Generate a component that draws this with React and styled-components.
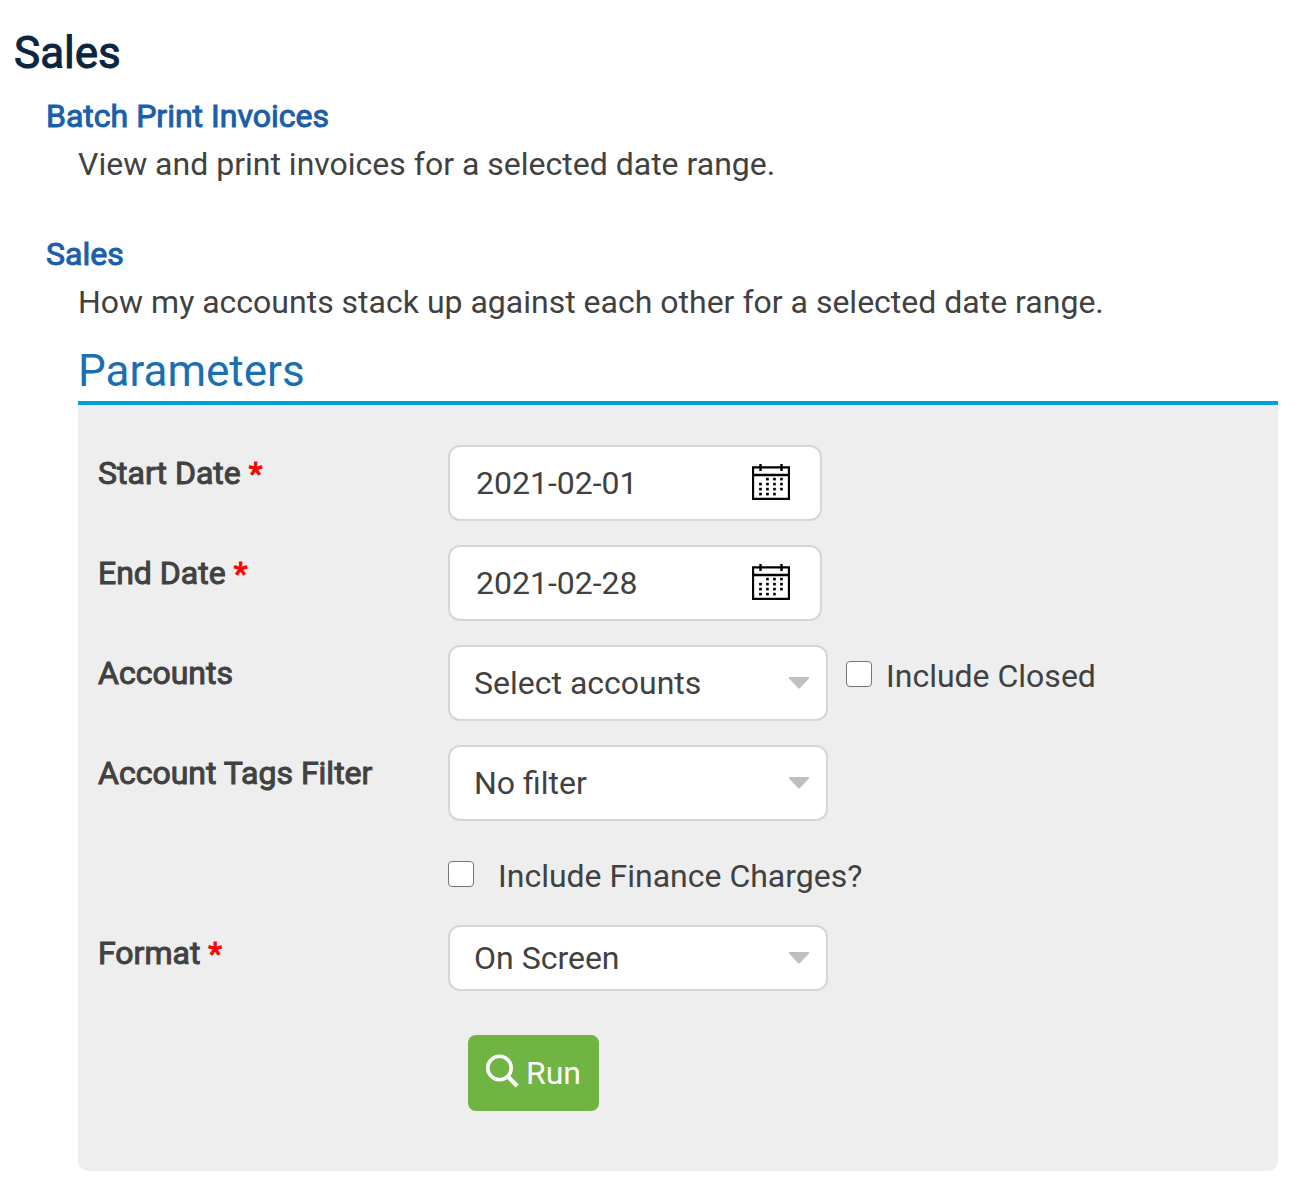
import { useState } from 'react';
import styled, { createGlobalStyle } from 'styled-components';

const GlobalStyle = createGlobalStyle`
  *, *::before, *::after {
    box-sizing: border-box;
  }

  body {
    margin: 0;
    background: #fff;
    color: #414141;
    font-family: Roboto, 'Liberation Sans', sans-serif;
    font-size: 32px;
    line-height: 48px;
  }

  input, select, button {
    font: inherit;
    color: inherit;
  }
`;

const Page = styled.main`
  padding: 28px 34px 6px 14px;
`;

const PageTitle = styled.h1`
  margin: 0 0 14px;
  color: #0a2540;
  font-size: 44px;
  font-weight: 400;
  line-height: 50px;
  -webkit-text-stroke: 1px currentColor;
`;

const Report = styled.section`
  margin: 0 0 42px 32px;

  &:last-child {
    margin-bottom: 0;
  }
`;

const ReportTitle = styled.h2`
  margin: 0;
  color: #1b5faa;
  font-size: 32px;
  font-weight: 400;
  -webkit-text-stroke: 1px currentColor;

  a {
    color: inherit;
    text-decoration: none;
  }
`;

const ReportBody = styled.div`
  margin-left: 32px;
`;

const Description = styled.p`
  margin: 0;
`;

const PanelTitle = styled.h3`
  margin: 20px 0 0;
  padding-bottom: 5px;
  border-bottom: 4px solid #00a0d8;
  color: #1a6fb3;
  font-size: 44px;
  font-weight: 400;
  line-height: 50px;
`;

const Panel = styled.form`
  display: flex;
  flex-direction: column;
  gap: 24px;
  padding: 40px 20px 60px;
  background: #eee;
  border-radius: 0 0 10px 10px;
`;

const Row = styled.div`
  display: grid;
  grid-template-columns: 350px 1fr;
  align-items: start;
`;

const Label = styled.label`
  line-height: 56px;
  -webkit-text-stroke: 1px currentColor;
`;

const Required = styled.span`
  color: #f00;
  -webkit-text-stroke: 1px currentColor;
`;

const Controls = styled.div`
  grid-column: 2;
  display: flex;
  flex-wrap: wrap;
  column-gap: 18px;
`;

const DateBox = styled.div`
  display: flex;
  align-items: center;
  width: 374px;
  height: 76px;
  padding: 0 30px 0 26px;
  background: #fff;
  border: 2px solid #d6d6d6;
  border-radius: 12px;
`;

const DateInput = styled.input`
  flex: 1;
  min-width: 0;
  padding: 0;
  background: none;
  border: 0;
  outline: none;
`;

const CalendarButton = styled.button`
  display: flex;
  padding: 0 0 2px;
  background: none;
  border: 0;
  cursor: pointer;
`;

const SelectBox = styled.div`
  position: relative;
  width: 380px;

  svg {
    position: absolute;
    top: 50%;
    right: 18px;
    transform: translateY(-50%);
    pointer-events: none;
  }
`;

const Select = styled.select`
  display: block;
  width: 100%;
  height: ${({ $compact }) => ($compact ? '66px' : '76px')};
  padding: 0 48px 0 24px;
  appearance: none;
  background: #fff;
  border: 2px solid #d6d6d6;
  border-radius: 12px;
`;

const CheckLabel = styled.label`
  display: flex;
  align-items: baseline;
  gap: ${({ $wide }) => ($wide ? '24px' : '14px')};
  height: 56px;
  line-height: 62px;
`;

const Checkbox = styled.input`
  flex: none;
  width: 26px;
  height: 26px;
  margin: 0;
  appearance: none;
  background: #fff;
  border: 1px solid #767676;
  border-radius: 4px;

  &:checked {
    background: #1b5faa;
  }
`;

const RunButton = styled.button`
  display: flex;
  align-items: center;
  align-self: flex-start;
  gap: 7px;
  height: 76px;
  margin: 20px 0 0 370px;
  padding: 0 18px;
  background: #70b443;
  border: 0;
  border-radius: 8px;
  color: #fff;
  cursor: pointer;

  svg {
    margin-bottom: 4px;
  }
`;

const dots = [
  [15, 15], [22, 15], [29, 15],
  [8, 20], [15, 20], [22, 20], [29, 20],
  [8, 25], [15, 25], [22, 25], [29, 25],
  [8, 30], [15, 30], [22, 30],
];

const CalendarIcon = () => (
  <svg width="38" height="36" viewBox="0 0 38 36" aria-hidden="true">
    <path d="M1 3.3h36v31.5H1zM1 11h36" fill="none" stroke="#000" strokeWidth="2.3" />
    <path d="M8.5 0v7M29.5 0v7" stroke="#000" strokeWidth="2.4" />
    {dots.map(([x, y]) => (
      <rect key={`${x}-${y}`} x={x - 0.9} y={y - 1.2} width="2.7" height="2.6" />
    ))}
  </svg>
);

const CaretIcon = () => (
  <svg width="22" height="12" viewBox="0 0 22 12" aria-hidden="true">
    <path d="M1 0h20v1.5L12 11q-1 1-2 0L1 1.5z" fill="#bfbfbf" />
  </svg>
);

const SearchIcon = () => (
  <svg width="33" height="34" viewBox="0 0 33 34" aria-hidden="true">
    <circle cx="13.5" cy="14" r="11.7" fill="none" stroke="#fff" strokeWidth="3.6" />
    <path d="M21.8 22.5l9.4 9.4" stroke="#fff" strokeWidth="4.2" />
  </svg>
);

const DateField = ({ id, label, initial }) => {
  const [value, setValue] = useState(initial);

  return (
    <Row>
      <Label htmlFor={id}>
        {label} <Required>*</Required>
      </Label>
      <Controls>
        <DateBox>
          <DateInput id={id} type="text" value={value} onChange={(e) => setValue(e.target.value)} />
          <CalendarButton type="button" aria-label={`Choose ${label}`}>
            <CalendarIcon />
          </CalendarButton>
        </DateBox>
      </Controls>
    </Row>
  );
};

const SelectField = ({ id, label, option, required, compact, children }) => (
  <Row>
    <Label htmlFor={id}>
      {label} {required && <Required>*</Required>}
    </Label>
    <Controls>
      <SelectBox>
        <Select id={id} $compact={compact}>
          <option>{option}</option>
        </Select>
        <CaretIcon />
      </SelectBox>
      {children}
    </Controls>
  </Row>
);

const App = () => {
  return (
    <>
      <GlobalStyle />
      <Page>
        <PageTitle>Sales</PageTitle>

        <Report>
          <ReportTitle>
            <a href="#batch-print">Batch Print Invoices</a>
          </ReportTitle>
          <ReportBody>
            <Description>View and print invoices for a selected date range.</Description>
          </ReportBody>
        </Report>

        <Report>
          <ReportTitle>
            <a href="#sales">Sales</a>
          </ReportTitle>
          <ReportBody>
            <Description>
              How my accounts stack up against each other for a selected date range.
            </Description>
            <PanelTitle>Parameters</PanelTitle>
            <Panel onSubmit={(e) => e.preventDefault()}>
              <DateField id="start-date" label="Start Date" initial="2021-02-01" />
              <DateField id="end-date" label="End Date" initial="2021-02-28" />
              <SelectField id="accounts" label="Accounts" option="Select accounts">
                <CheckLabel>
                  <Checkbox type="checkbox" />
                  Include Closed
                </CheckLabel>
              </SelectField>
              <SelectField id="tags" label="Account Tags Filter" option="No filter" />
              <Row>
                <Controls>
                  <CheckLabel $wide>
                    <Checkbox type="checkbox" />
                    Include Finance Charges?
                  </CheckLabel>
                </Controls>
              </Row>
              <SelectField id="format" label="Format" option="On Screen" required compact />
              <RunButton type="submit">
                <SearchIcon />
                Run
              </RunButton>
            </Panel>
          </ReportBody>
        </Report>
      </Page>
    </>
  );
};

export default App;
